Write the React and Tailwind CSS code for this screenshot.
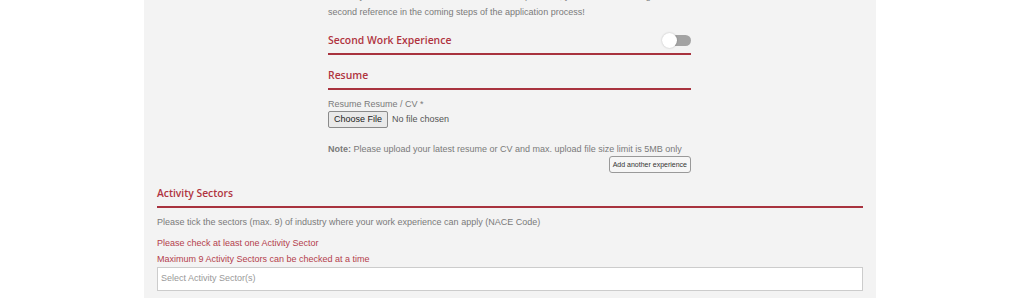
export default function App() {
  const sans = { fontFamily: '"Liberation Sans", Arial, sans-serif' };
  const head = { fontFamily: '"Open Sans", sans-serif' };
  return (
    <div className="w-[1024px] h-[298px] bg-white overflow-hidden flex justify-start">
      <div className="ml-[144px] w-[732px] h-[298px] bg-[#f3f3f3] flex flex-col" style={sans}>
        <div className="w-[363px] ml-[184px] flex flex-col mt-[-12px]">
          <p className="text-[9px] leading-[16px] text-[#7a7a7a]">
            Note: If you do not have or fill the second work experience, you will be asked to give a second reference in the coming steps of the application process!
          </p>
          <div className="mt-[8px] flex items-center justify-between border-b-2 border-[#a8323e] h-[27px]">
            <span className="text-[10.4px] font-semibold text-[#b0343f]" style={head}>Second Work Experience</span>
            <span className="relative w-[29px] h-[15px] flex items-center">
              <span className="absolute right-0 w-[25px] h-[11px] rounded-full bg-[#a3a3a3]" />
              <span className="absolute left-0 w-[15px] h-[15px] rounded-full bg-white shadow-[0_0_2px_rgba(0,0,0,0.25)]" />
            </span>
          </div>
          <div className="mt-[8px] flex items-center border-b-2 border-[#a8323e] h-[27px]">
            <span className="text-[10.4px] font-semibold text-[#b0343f]" style={head}>Resume</span>
          </div>
          <div className="mt-[8px] text-[9px] text-[#7a7a7a] leading-[12px]">Resume Resume / CV *</div>
          <div className="mt-[1px] flex items-center gap-[4px]">
            <button className="h-[17px] px-[5px] text-[9px] text-[#222] bg-[#e9e9e9] border border-[#8a8a8a] rounded-[2px] leading-none">Choose File</button>
            <span className="text-[9px] text-[#555]">No file chosen</span>
          </div>
          <div className="mt-[15px] text-[9px] text-[#7a7a7a] leading-[12px] whitespace-nowrap">
            <span className="font-bold">Note:</span> Please upload your latest resume or CV and max. upload file size limit is 5MB only
          </div>
          <div className="flex justify-end mt-[1px]">
            <button className="h-[17px] px-[3px] text-[7px] text-[#333] bg-[#f6f6f6] border border-[#999] rounded-[3px] leading-none">Add another experience</button>
          </div>
        </div>
        <div className="mx-[13px] mt-[9px] flex items-center border-b-2 border-[#a8323e] h-[26px]">
          <span className="text-[10.3px] font-semibold text-[#b0343f]" style={head}>Activity Sectors</span>
        </div>
        <div className="mx-[13px] mt-[8px] text-[9px] text-[#7a7a7a] leading-[12px]">
          Please tick the sectors (max. 9) of industry where your work experience can apply (NACE Code)
        </div>
        <div className="mx-[13px] mt-[7px] text-[9px] text-[#b3404c] leading-[16px]">
          <div>Please check at least one Activity Sector</div>
          <div>Maximum 9 Activity Sectors can be checked at a time</div>
        </div>
        <div className="mx-[13px] h-[24px] shrink-0 bg-white border border-[#cccccc] flex items-center px-[3px] text-[9px] text-[#999]">
          Select Activity Sector(s)
        </div>
      </div>
    </div>
  );
}
